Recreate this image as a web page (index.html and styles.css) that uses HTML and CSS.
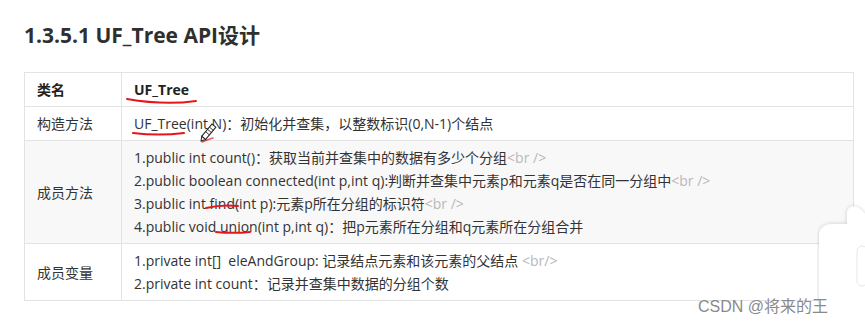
FILE: index.html
```html
<!DOCTYPE html>
<html lang="zh">
<head>
<meta charset="utf-8">
<link rel="stylesheet" href="styles.css">
</head>
<body>
<div class="page">
  <h2 class="title">1.3.5.1 UF_Tree API设计</h2>
  <table class="api">
    <tr class="row-head">
      <td class="c1"><b>类名</b></td>
      <td class="c2"><b>UF_Tree</b></td>
    </tr>
    <tr>
      <td class="c1">构造方法</td>
      <td class="c2">UF_Tree(int N)：初始化并查集，以整数标识(0,N-1)个结点</td>
    </tr>
    <tr class="alt">
      <td class="c1">成员方法</td>
      <td class="c2">1.public int count()：获取当前并查集中的数据有多少个分组<span class="br">&lt;br /&gt;</span><br>2.public boolean connected(int p,int q):判断并查集中元素p和元素q是否在同一分组中<span class="br">&lt;br /&gt;</span><br>3.public int find(int p):元素p所在分组的标识符<span class="br">&lt;br /&gt;</span><br>4.public void union(int p,int q)：把p元素所在分组和q元素所在分组合并</td>
    </tr>
    <tr>
      <td class="c1">成员变量</td>
      <td class="c2">1.private int[]&nbsp; eleAndGroup: 记录结点元素和该元素的父结点 <span class="br">&lt;br/&gt;</span><br>2.private int count：记录并查集中数据的分组个数</td>
    </tr>
  </table>

  <svg class="marks" width="865" height="324" viewBox="0 0 865 324">
    <path d="M127 99 C150 103 175 104 196 101" stroke="#e8141c" stroke-width="2" fill="none" stroke-linecap="round"/>
    <path d="M133 133 C150 135 168 135 184 133" stroke="#e8141c" stroke-width="2" fill="none" stroke-linecap="round"/>
    <path d="M202 142 C206 140 210 139 213 138" stroke="#e8141c" stroke-width="1.5" fill="none" stroke-linecap="round" opacity="0.7"/>
    <path d="M206 208 C215 206 228 205 238 206" stroke="#e8141c" stroke-width="2" fill="none" stroke-linecap="round"/>
    <path d="M216 232 C226 233 240 233 250 232" stroke="#e8141c" stroke-width="2" fill="none" stroke-linecap="round"/>
    <g transform="translate(212 124) rotate(40)">
      <rect x="0" y="0" width="5" height="16" fill="#fff" stroke="#222" stroke-width="1"/>
      <path d="M0 4 H5 M0 7 H5 M0 10 H5" stroke="#222" stroke-width="0.8"/>
      <path d="M0 16 L2.5 20 L5 16 Z" fill="#fff" stroke="#222" stroke-width="1"/>
    </g>
  </svg>

  <div class="widget">
    <svg width="48" height="110" viewBox="0 0 48 110">
      <defs>
        <filter id="sh" x="-40%" y="-40%" width="180%" height="180%">
          <feDropShadow dx="0" dy="0" stdDeviation="2" flood-color="#000" flood-opacity="0.18"/>
        </filter>
      </defs>
      <path d="M30 18 C30 10 38 8 44 14 L48 18 L48 110 L8 110 C4 110 2 108 2 104 L2 40 C2 32 8 28 16 28 L30 28 Z" fill="#fff" filter="url(#sh)"/>
      <rect x="40" y="50" width="10" height="40" rx="5" fill="#fff" stroke="#e6e6e6"/>
    </svg>
  </div>

  <div class="watermark">CSDN @将来的王</div>
</div>
</body>
</html>
```

FILE: styles.css
```css
html, body {
  margin: 0;
  padding: 0;
  background: #fff;
}
.page {
  position: relative;
  width: 865px;
  height: 324px;
  overflow: hidden;
  padding: 22px 0 0 24px;
  box-sizing: border-box;
  font-family: "Open Sans", "Noto Sans CJK SC", sans-serif;
  color: #333;
}
.title {
  margin: 0 0 24px 0;
  font-size: 21px;
  font-weight: 700;
  line-height: 26px;
  color: #2f2f2f;
}
.api {
  border-collapse: collapse;
  width: 830px;
  font-size: 14px;
  line-height: 23px;
}
.api td {
  border: 1px solid #e3e3e3;
  padding: 5px 12px;
  vertical-align: middle;
  text-align: left;
}
.api .c1 {
  width: 72px;
}
.api tr.alt td {
  background: #f8f8f8;
}
.api b {
  font-weight: 700;
  color: #222;
}
.br {
  color: #b8b8b8;
}
.marks {
  position: absolute;
  left: 0;
  top: 0;
  pointer-events: none;
}
.widget {
  position: absolute;
  right: 0;
  top: 196px;
}
.watermark {
  position: absolute;
  left: 698px;
  top: 293px;
  font-family: "Liberation Sans", "Noto Sans CJK SC", sans-serif;
  font-size: 16px;
  color: #8a8a8a;
}
```
